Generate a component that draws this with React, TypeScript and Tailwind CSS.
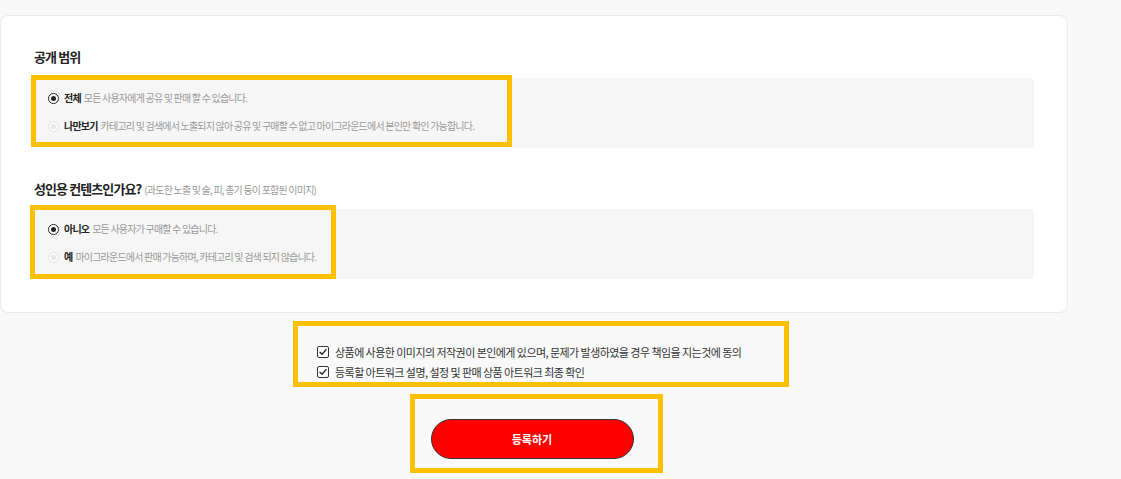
import { useState } from "react";

const font = { fontFamily: '"Noto Sans CJK KR", "Noto Sans", sans-serif' };

type Option = { label: string; desc: string };

const RadioRow: React.FC<Option & { checked: boolean }> = ({ label, desc, checked }) => (
  <div className="flex items-center h-[16px]">
    {checked ? (
      <span className="w-[11px] h-[11px] rounded-full border-[1.5px] border-[#222] bg-white flex items-center justify-center mr-[5px]">
        <span className="w-[5px] h-[5px] rounded-full bg-[#222]" />
      </span>
    ) : (
      <span className="w-[11px] h-[11px] rounded-full border border-[#e2e2e2] bg-[#fafafa] flex items-center justify-center mr-[5px]">
        <span className="w-[5px] h-[5px] rounded-full bg-[#e6e6e6]" />
      </span>
    )}
    <span className="text-[10px] leading-[16px] font-bold text-[#222] tracking-[-0.08em]">{label}</span>
    <span className="text-[10px] leading-[16px] text-[#999] ml-[3px] tracking-[-0.08em]">{desc}</span>
  </div>
);

const RadioBox: React.FC<{ options: Option[] }> = ({ options }) => (
  <div className="bg-[#f6f6f6] rounded-[3px] h-[70px] pl-[14px] pt-[12px] flex flex-col gap-[12px]">
    {options.map((o, i) => (
      <RadioRow key={o.label} {...o} checked={i === 0} />
    ))}
  </div>
);

const Check: React.FC<{ text: string }> = ({ text }) => (
  <div className="flex items-center h-[20px]">
    <span className="w-[12px] h-[12px] rounded-[2px] border border-[#333] bg-white flex items-center justify-center mr-[6px]">
      <svg width="8" height="8" viewBox="0 0 8 8" fill="none">
        <path d="M1 4.2 L3.1 6.2 L7 1.6" stroke="#222" strokeWidth="1.4" strokeLinecap="round" strokeLinejoin="round" />
      </svg>
    </span>
    <span className="text-[11px] text-[#333] tracking-[-0.05em]">{text}</span>
  </div>
);

const Mark: React.FC<{ cls: string }> = ({ cls }) => (
  <div className={`absolute border-[5px] border-[#ffc000] pointer-events-none ${cls}`} />
);

export default function App() {
  const [agree] = useState(true);
  return (
    <div className="relative w-[1121px] h-[479px] bg-[#f9f9f9] overflow-hidden" style={font}>
      <div className="pt-[15px] w-[1068px]">
        <div className="bg-white border border-[#ebebeb] rounded-[8px] h-[298px] px-[33px] pt-[32px]">
          <h3 className="text-[13px] font-bold text-[#222] leading-[18px] mb-[12px] tracking-[-0.07em]">공개 범위</h3>
          <RadioBox
            options={[
              { label: "전체", desc: "모든 사용자에게 공유 및 판매 할 수 있습니다." },
              { label: "나만보기", desc: "카테고리 및 검색에서 노출되지 않아 공유 및 구매할 수 없고 마이그라운드에서 본인만 확인 가능합니다." },
            ]}
          />
          <div className="flex items-baseline mt-[32px] mb-[11px]">
            <h3 className="text-[13px] font-bold text-[#222] leading-[18px] tracking-[-0.07em]">성인용 컨텐츠인가요?</h3>
            <span className="text-[10px] text-[#999] ml-[3px] tracking-[-0.08em]">(과도한 노출 및 술, 피, 총기 등이 포함된 이미지)</span>
          </div>
          <RadioBox
            options={[
              { label: "아니오", desc: "모든 사용자가 구매할 수 있습니다." },
              { label: "예", desc: "마이그라운드에서 판매 가능하며, 카테고리 및 검색 되지 않습니다." },
            ]}
          />
        </div>
        {agree && (
          <div className="ml-[317px] mt-[29px] flex flex-col">
            <Check text="상품에 사용한 이미지의 저작권이 본인에게 있으며, 문제가 발생하였을 경우 책임을 지는것에 동의" />
            <Check text="등록할 아트워크 설명, 설정 및 판매 상품 아트워크 최종 확인" />
          </div>
        )}
        <div className="flex justify-center w-[1064px] mt-[37px]">
          <button className="w-[203px] h-[40px] rounded-full bg-[#ff0000] border border-[#333] text-white text-[11px] font-bold">
            등록하기
          </button>
        </div>
      </div>
      <Mark cls="left-[31px] top-[75px] w-[481px] h-[72px]" />
      <Mark cls="left-[30px] top-[205px] w-[306px] h-[74px]" />
      <Mark cls="left-[293px] top-[321px] w-[496px] h-[66px]" />
      <Mark cls="left-[410px] top-[394px] w-[253px] h-[79px]" />
    </div>
  );
}
